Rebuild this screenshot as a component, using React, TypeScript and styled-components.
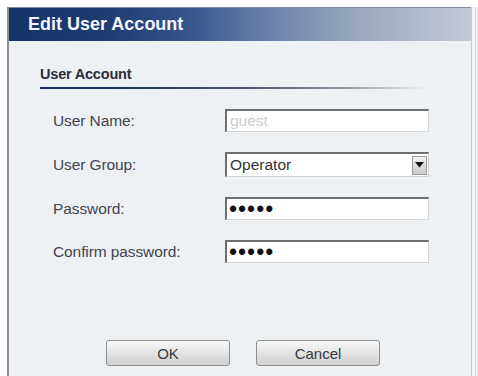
import React from "react";
import styled, { createGlobalStyle } from "styled-components";

const Global = createGlobalStyle`
  html, body { margin: 0; padding: 0; background: #ffffff; }
  body { font-family: "Liberation Sans", Arial, sans-serif; }
`;

const Page = styled.div`
  width: 478px;
  height: 376px;
  overflow: hidden;
  padding: 7px 0 0 7px;
  box-sizing: border-box;
`;

const Dialog = styled.div`
  width: 465px;
  height: 380px;
  box-sizing: border-box;
  background: #eef1f4;
  border-left: 2px solid #8c8f94;
  border-right: 1px solid #c9cdd2;
  box-shadow: 3px 0 0 #f3f4f6, 4px 0 0 #d4d7db, 8px 0 0 #eceef0;
  display: flex;
  flex-direction: column;
`;

const TitleBar = styled.div`
  height: 34px;
  box-sizing: border-box;
  border-top: 1px solid #7d8aa0;
  background: linear-gradient(
    to right,
    #15346a 0%,
    #1c3b70 20%,
    #34538a 38%,
    #5e77a3 52%,
    #93a3bd 72%,
    #c3cad5 100%
  );
  display: flex;
  align-items: center;
  padding-left: 19px;
`;

const Title = styled.h1`
  margin: 0;
  color: #f4f6fa;
  font-size: 18px;
  font-weight: bold;
  font-family: "Liberation Sans", Arial, sans-serif;
`;

const Body = styled.div`
  flex: 1;
  padding: 24px 0 0 31px;
  display: flex;
  flex-direction: column;
`;

const Section = styled.div`
  width: 385px;
  padding-bottom: 4px;
  border-bottom: 2px solid transparent;
  border-image: linear-gradient(
      to right,
      #13305e 0%,
      #27395a 30%,
      #4d586c 55%,
      #8d95a3 78%,
      rgba(238, 241, 244, 0) 100%
    )
    1;
`;

const SectionTitle = styled.h2`
  margin: 0;
  font-size: 14.5px;
  line-height: 18px;
  font-weight: bold;
  color: #2a2e3a;
  letter-spacing: -0.2px;
`;

const Form = styled.div`
  display: grid;
  grid-template-columns: 172px 204px;
  row-gap: 20px;
  padding: 20px 0 0 13px;
  align-items: center;
`;

const Label = styled.label`
  font-size: 15.5px;
  color: #434350;
  letter-spacing: -0.1px;
`;

const Field = styled.div<{ $h?: number }>`
  height: ${(p) => p.$h ?? 23}px;
  box-sizing: border-box;
  background: #ffffff;
  border-top: 2px solid #6e6e6e;
  border-left: 2px solid #6e6e6e;
  border-right: 1px solid #d2d2d2;
  border-bottom: 1px solid #d2d2d2;
  display: flex;
  align-items: center;
  padding-left: 3px;
  font-size: 15.5px;
  color: #333338;
`;

const Placeholder = styled.span`
  color: #c9cbce;
`;

const Dots = styled.span`
  font-size: 23px;
  letter-spacing: 1px;
  color: #111;
  line-height: 1;
  margin-left: -1px;
`;

const SelectText = styled.span`
  flex: 1;
`;

const Arrow = styled.div`
  width: 15px;
  height: 19px;
  margin-right: 1px;
  box-sizing: border-box;
  border: 1px solid #9a9a9a;
  background: linear-gradient(#f2f2f2, #c9c9c9);
  display: flex;
  align-items: center;
  justify-content: center;
`;

const Buttons = styled.div`
  display: flex;
  gap: 26px;
  padding-left: 66px;
  margin-top: 77px;
`;

const Button = styled.button`
  width: 124px;
  height: 26px;
  box-sizing: border-box;
  border: 1px solid #8e8e8e;
  border-radius: 3px;
  background: linear-gradient(#f7f7f7 0%, #e6e6e6 45%, #cfcfcf 100%);
  box-shadow: inset 0 1px 0 #ffffff;
  font-family: "Liberation Sans", Arial, sans-serif;
  font-size: 15px;
  color: #3a3a40;
  padding: 0;
`;

export default function App() {
  return (
    <>
      <Global />
      <Page>
        <Dialog>
          <TitleBar>
            <Title>Edit User Account</Title>
          </TitleBar>
          <Body>
            <Section>
              <SectionTitle>User Account</SectionTitle>
            </Section>
            <Form>
              <Label>User Name:</Label>
              <Field>
                <Placeholder>guest</Placeholder>
              </Field>
              <Label>User Group:</Label>
              <Field $h={25}>
                <SelectText>Operator</SelectText>
                <Arrow>
                  <svg width="9" height="6" viewBox="0 0 9 6">
                    <path d="M0 0 H9 L4.5 5.5 Z" fill="#111" />
                  </svg>
                </Arrow>
              </Field>
              <Label>Password:</Label>
              <Field>
                <Dots>•••••</Dots>
              </Field>
              <Label>Confirm password:</Label>
              <Field>
                <Dots>•••••</Dots>
              </Field>
            </Form>
            <Buttons>
              <Button>OK</Button>
              <Button>Cancel</Button>
            </Buttons>
          </Body>
        </Dialog>
      </Page>
    </>
  );
}
